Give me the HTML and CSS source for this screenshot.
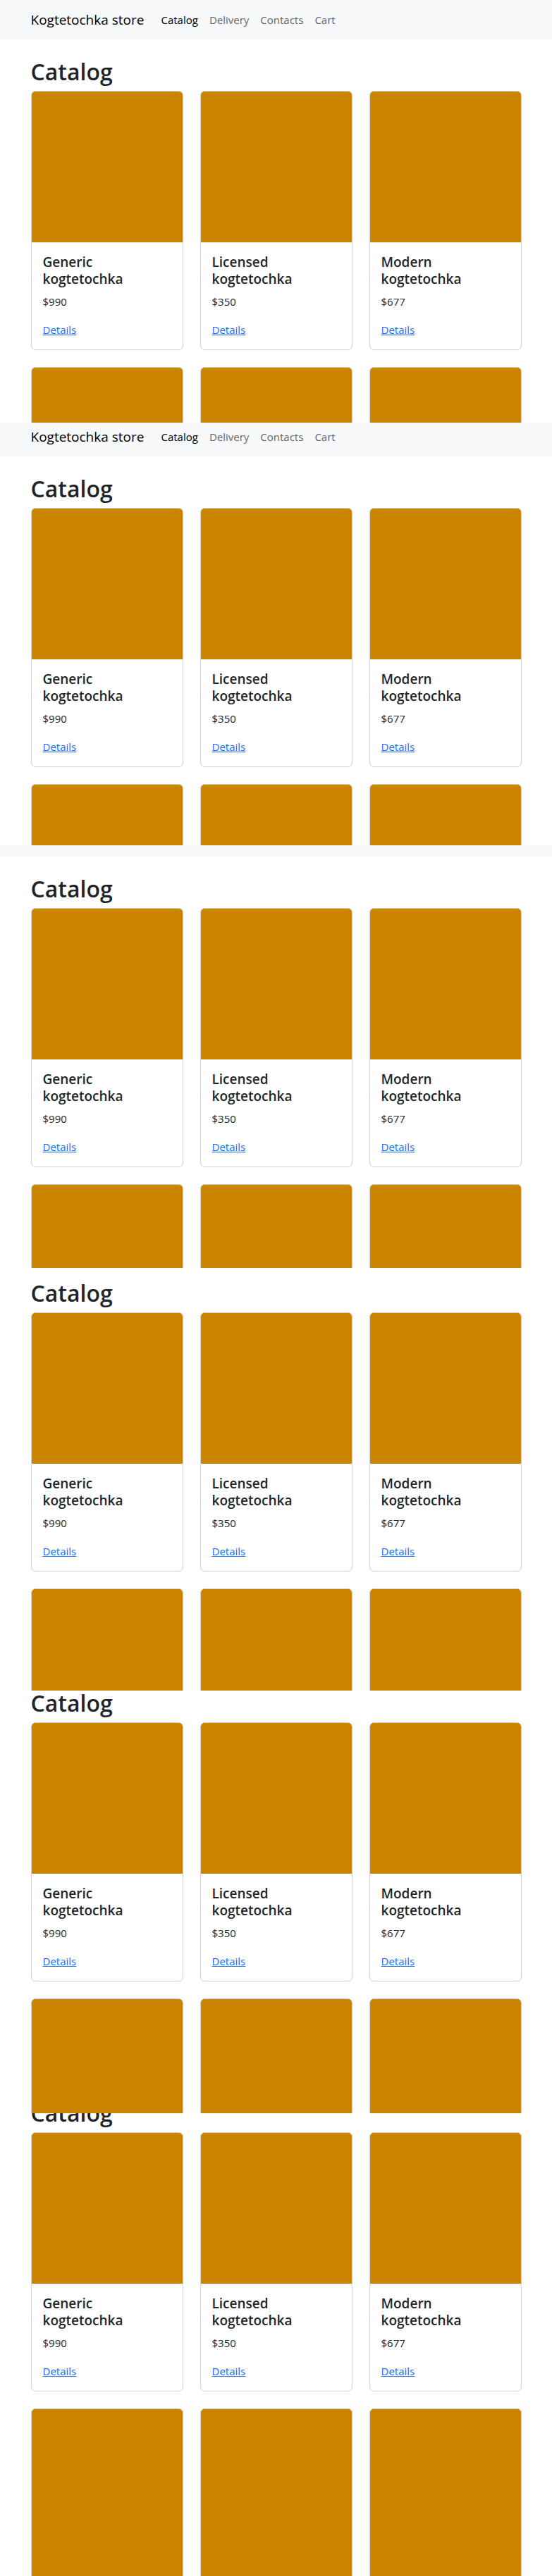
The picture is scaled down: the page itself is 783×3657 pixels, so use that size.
FILE: index.html
```html
<!DOCTYPE html>
<html lang="en">
<head>
<meta charset="utf-8">
<meta name="viewport" content="width=device-width, initial-scale=1">
<title>Kogtetochka store</title>
<link rel="stylesheet" href="styles.css">
</head>
<body>
<div class="view">
  <header class="navbar">
    <nav class="container navbar-inner">
      <a class="brand" href="#">Kogtetochka store</a>
      <a class="nav-link active" href="#">Catalog</a>
      <a class="nav-link" href="#">Delivery</a>
      <a class="nav-link" href="#">Contacts</a>
      <a class="nav-link" href="#">Cart</a>
    </nav>
  </header>
  <main class="container catalog">
    <h1 class="heading">Catalog</h1>
    <div class="grid">
      <article class="card"><div class="cover"></div><div class="body"><h2 class="title">Generic kogtetochka</h2><p class="price">$990</p><a class="details" href="#">Details</a></div></article>
      <article class="card"><div class="cover"></div><div class="body"><h2 class="title">Licensed kogtetochka</h2><p class="price">$350</p><a class="details" href="#">Details</a></div></article>
      <article class="card"><div class="cover"></div><div class="body"><h2 class="title">Modern kogtetochka</h2><p class="price">$677</p><a class="details" href="#">Details</a></div></article>
      <article class="card"><div class="cover tall"></div></article>
      <article class="card"><div class="cover tall"></div></article>
      <article class="card"><div class="cover tall"></div></article>
    </div>
  </main>
</div>
<div class="view">
  <header class="navbar scrolled-8">
    <nav class="container navbar-inner">
      <a class="brand" href="#">Kogtetochka store</a>
      <a class="nav-link active" href="#">Catalog</a>
      <a class="nav-link" href="#">Delivery</a>
      <a class="nav-link" href="#">Contacts</a>
      <a class="nav-link" href="#">Cart</a>
    </nav>
  </header>
  <main class="container catalog">
    <h1 class="heading">Catalog</h1>
    <div class="grid">
      <article class="card"><div class="cover"></div><div class="body"><h2 class="title">Generic kogtetochka</h2><p class="price">$990</p><a class="details" href="#">Details</a></div></article>
      <article class="card"><div class="cover"></div><div class="body"><h2 class="title">Licensed kogtetochka</h2><p class="price">$350</p><a class="details" href="#">Details</a></div></article>
      <article class="card"><div class="cover"></div><div class="body"><h2 class="title">Modern kogtetochka</h2><p class="price">$677</p><a class="details" href="#">Details</a></div></article>
      <article class="card"><div class="cover tall"></div></article>
      <article class="card"><div class="cover tall"></div></article>
      <article class="card"><div class="cover tall"></div></article>
    </div>
  </main>
</div>
<div class="view">
  <header class="navbar scrolled-40">
    <nav class="container navbar-inner">
      <a class="brand" href="#">Kogtetochka store</a>
    </nav>
  </header>
  <main class="container catalog">
    <h1 class="heading">Catalog</h1>
    <div class="grid">
      <article class="card"><div class="cover"></div><div class="body"><h2 class="title">Generic kogtetochka</h2><p class="price">$990</p><a class="details" href="#">Details</a></div></article>
      <article class="card"><div class="cover"></div><div class="body"><h2 class="title">Licensed kogtetochka</h2><p class="price">$350</p><a class="details" href="#">Details</a></div></article>
      <article class="card"><div class="cover"></div><div class="body"><h2 class="title">Modern kogtetochka</h2><p class="price">$677</p><a class="details" href="#">Details</a></div></article>
      <article class="card"><div class="cover tall"></div></article>
      <article class="card"><div class="cover tall"></div></article>
      <article class="card"><div class="cover tall"></div></article>
    </div>
  </main>
</div>
<div class="view">
  <main class="container catalog scrolled-10">
    <h1 class="heading">Catalog</h1>
    <div class="grid">
      <article class="card"><div class="cover"></div><div class="body"><h2 class="title">Generic kogtetochka</h2><p class="price">$990</p><a class="details" href="#">Details</a></div></article>
      <article class="card"><div class="cover"></div><div class="body"><h2 class="title">Licensed kogtetochka</h2><p class="price">$350</p><a class="details" href="#">Details</a></div></article>
      <article class="card"><div class="cover"></div><div class="body"><h2 class="title">Modern kogtetochka</h2><p class="price">$677</p><a class="details" href="#">Details</a></div></article>
      <article class="card"><div class="cover tall"></div></article>
      <article class="card"><div class="cover tall"></div></article>
      <article class="card"><div class="cover tall"></div></article>
    </div>
  </main>
</div>
<div class="view">
  <main class="container catalog scrolled-28">
    <h1 class="heading">Catalog</h1>
    <div class="grid">
      <article class="card"><div class="cover"></div><div class="body"><h2 class="title">Generic kogtetochka</h2><p class="price">$990</p><a class="details" href="#">Details</a></div></article>
      <article class="card"><div class="cover"></div><div class="body"><h2 class="title">Licensed kogtetochka</h2><p class="price">$350</p><a class="details" href="#">Details</a></div></article>
      <article class="card"><div class="cover"></div><div class="body"><h2 class="title">Modern kogtetochka</h2><p class="price">$677</p><a class="details" href="#">Details</a></div></article>
      <article class="card"><div class="cover tall"></div></article>
      <article class="card"><div class="cover tall"></div></article>
      <article class="card"><div class="cover tall"></div></article>
    </div>
  </main>
</div>
<div class="view last">
  <main class="container catalog scrolled-46">
    <h1 class="heading">Catalog</h1>
    <div class="grid">
      <article class="card"><div class="cover"></div><div class="body"><h2 class="title">Generic kogtetochka</h2><p class="price">$990</p><a class="details" href="#">Details</a></div></article>
      <article class="card"><div class="cover"></div><div class="body"><h2 class="title">Licensed kogtetochka</h2><p class="price">$350</p><a class="details" href="#">Details</a></div></article>
      <article class="card"><div class="cover"></div><div class="body"><h2 class="title">Modern kogtetochka</h2><p class="price">$677</p><a class="details" href="#">Details</a></div></article>
      <article class="card"><div class="cover tall"></div></article>
      <article class="card"><div class="cover tall"></div></article>
      <article class="card"><div class="cover tall"></div></article>
    </div>
  </main>
</div>
</body>
</html>
```
FILE: styles.css
```css
* { box-sizing: border-box; }

body {
  margin: 0;
  display: flex;
  flex-direction: column;
  min-height: 100vh;
  background: #fff;
  color: #212529;
  font: 400 16px/24px "Segoe UI", "Open Sans", "Noto Sans", sans-serif;
}

/* Each view is one scroll step of the catalog page. */
.view { flex: none; height: 600px; overflow: hidden; }
.view.last { flex: 1 0 600px; height: auto; max-height: 657px; }

.container { width: 100%; max-width: 720px; margin: 0 auto; padding: 0 12px; }

.navbar { background: #f8f9fa; padding: 8px 0; }
.navbar-inner { display: flex; align-items: center; }
.brand {
  margin-right: 16px;
  padding: 5px 0;
  font-size: 19px;
  line-height: 30px;
  color: #000;
  text-decoration: none;
}
.nav-link { padding: 8px; font-size: 15px; color: #646566; text-decoration: none; }
.nav-link.active { color: #000; }

.catalog { padding-top: 22px; }
.heading { margin: 0 0 3px; font-size: 32px; font-weight: 600; line-height: 48px; }
.grid { display: grid; grid-template-columns: repeat(3, 1fr); gap: 24px; }

.card { border: 1px solid #d2d3d3; border-radius: 6px; background: #fff; }
.cover { aspect-ratio: 1; border-radius: 5px 5px 0 0; background: #cb8400; }
.cover.tall { aspect-ratio: 3 / 4; }
.body { padding: 16px; }
.title { margin: 0 0 8px; font-size: 19px; font-weight: 600; line-height: 24px; }
.price { margin: 0 0 16px; font-size: 15px; }
.details { display: inline-block; font-size: 15px; color: #0d6efd; }

.scrolled-8 { margin-top: -8px; }
.scrolled-40 { margin-top: -40px; }
.scrolled-10 { margin-top: -10px; }
.scrolled-28 { margin-top: -28px; }
.scrolled-46 { margin-top: -46px; }
```
